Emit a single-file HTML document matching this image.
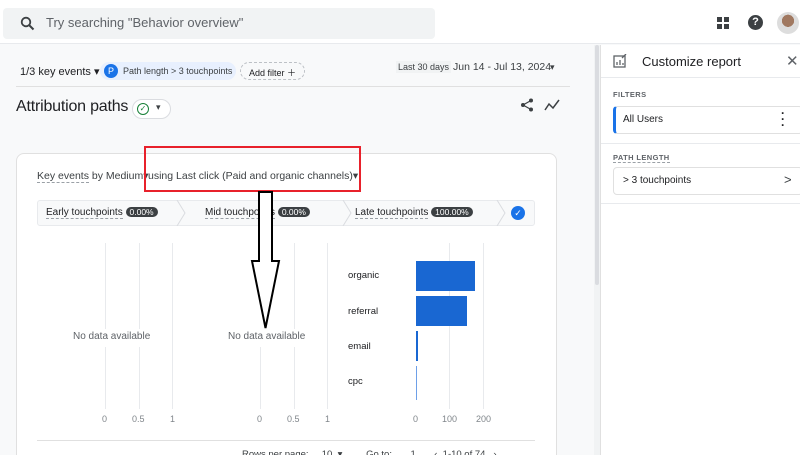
<!DOCTYPE html>
<html><head><style>
*{box-sizing:border-box;margin:0;padding:0}
html,body{width:800px;height:455px;overflow:hidden}
body{background:#f8f9fa;font-family:"Liberation Sans",sans-serif;color:#3c4043;position:relative}
.a{position:absolute;white-space:nowrap}
.g{position:absolute;width:1px;background:#e8eaed}
.t{font-size:9px;color:#80868b}
</style></head><body>
<div class="a" style="left:0;top:0;width:800px;height:44px;background:#fff;border-bottom:1px solid #e8eaed"></div>
<div class="a" style="left:3px;top:8px;width:432px;height:31px;background:#f1f3f4;border-radius:4px"></div>
<svg class="a" style="left:20px;top:16px" width="15" height="15" viewBox="0 0 15 15"><circle cx="6" cy="6" r="4.3" fill="none" stroke="#3c4043" stroke-width="1.8"/><path d="M9 9l4.5 4.5" stroke="#3c4043" stroke-width="2"/></svg>
<div class="a" style="left:46px;top:15px;font-size:13px;color:#5f6368">Try searching "Behavior overview"</div>
<svg class="a" style="left:717px;top:17px" width="13" height="13"><rect x="0" y="0" width="5" height="5" fill="#3c4043"/><rect x="7" y="0" width="5" height="5" fill="#3c4043"/><rect x="0" y="7" width="5" height="5" fill="#3c4043"/><rect x="7" y="7" width="5" height="5" fill="#3c4043"/></svg>
<div class="a" style="left:748px;top:15px;width:15px;height:15px;border-radius:50%;background:#3c4043;color:#fff;font-size:11px;font-weight:bold;text-align:center;line-height:15px">?</div>
<div class="a" style="left:777px;top:12px;width:22px;height:22px;border-radius:50%;background:radial-gradient(circle at 50% 40%,#a07860 0 35%,#ddd 36%)"></div>

<div class="a" style="left:20px;top:65px;font-size:11px;color:#202124">1/3 key events ▾</div>
<div class="a" style="left:100px;top:62px;width:136px;height:18px;border-radius:9px;background:#e8f0fe"></div>
<div class="a" style="left:104px;top:64px;width:14px;height:14px;border-radius:50%;background:#1a73e8;color:#fff;font-size:9px;text-align:center;line-height:14px">P</div>
<div class="a" style="left:123px;top:66px;font-size:9px;color:#3c4043">Path length &gt; 3 touchpoints</div>
<div class="a" style="left:240px;top:62px;width:65px;height:18px;border-radius:9px;border:1px dashed #bdc1c6;font-size:9px;color:#202124;padding:3px 0 0 8px">Add filter ＋</div>
<div class="a" style="left:396px;top:61px;padding:1px 2px;background:#f1f3f4;font-size:9px">Last 30 days</div>
<div class="a" style="left:453px;top:61px;font-size:10.5px;color:#3c4043">Jun 14 - Jul 13, 2024</div>
<div class="a" style="left:550px;top:62px;font-size:9px">▾</div>
<div class="a" style="left:16px;top:86px;width:554px;height:1px;background:#e0e0e0"></div>
<div class="a" style="left:16px;top:98px;font-size:16px;color:#202124;letter-spacing:-0.2px">Attribution paths</div>
<div class="a" style="left:132px;top:99px;width:39px;height:20px;border-radius:10px;border:1px solid #dadce0;background:#fff"></div>
<div class="a" style="left:137px;top:103px;width:12px;height:12px;border-radius:50%;border:1.5px solid #188038;font-size:8px;color:#188038;text-align:center;line-height:10px">✓</div>
<div class="a" style="left:156px;top:102px;font-size:9px">▾</div>
<svg class="a" style="left:520px;top:98px" width="14" height="14"><circle cx="11" cy="2.5" r="2" fill="#3c4043"/><circle cx="3" cy="7" r="2" fill="#3c4043"/><circle cx="11" cy="11.5" r="2" fill="#3c4043"/><path d="M11 2.5L3 7l8 4.5" stroke="#3c4043" fill="none" stroke-width="1.2"/></svg>
<svg class="a" style="left:544px;top:98px" width="16" height="14"><path d="M1 12l4-6 4 4 6-8" stroke="#3c4043" fill="none" stroke-width="1.5"/></svg>

<div class="a" style="left:16px;top:153px;width:541px;height:320px;background:#fff;border:1px solid #e0e0e0;border-radius:8px"></div>
<div class="a" style="left:37px;top:170px;font-size:10.5px;color:#3c4043"><span style="border-bottom:1px dashed #9aa0a6">Key events</span> by Medium▾</div>
<div class="a" style="left:148px;top:170px;font-size:10.5px;color:#3c4043">using Last click (Paid and organic channels)▾</div>
<div class="a" style="left:37px;top:200px;width:498px;height:26px;background:#f8f9fa;border:1px solid #e8eaed;border-radius:3px"></div>
<svg class="a" style="left:37px;top:200px" width="498" height="26"><path d="M140 0l8 13-8 13M306 0l8 13-8 13M460 0l8 13-8 13" stroke="#dadce0" fill="none"/></svg>
<div class="a" style="left:46px;top:207px;font-size:10px;color:#202124"><span style="border-bottom:1px dashed #9aa0a6">Early touchpoints</span> <span style="background:#3c4043;color:#fff;border-radius:6px;padding:0 4px;font-size:8.5px">0.00%</span></div>
<div class="a" style="left:205px;top:207px;font-size:10px;color:#202124"><span style="border-bottom:1px dashed #9aa0a6">Mid touchpoints</span> <span style="background:#3c4043;color:#fff;border-radius:6px;padding:0 4px;font-size:8.5px">0.00%</span></div>
<div class="a" style="left:355px;top:207px;font-size:10px;color:#202124"><span style="border-bottom:1px dashed #9aa0a6">Late touchpoints</span> <span style="background:#3c4043;color:#fff;border-radius:6px;padding:0 4px;font-size:8.5px">100.00%</span></div>
<div class="a" style="left:511px;top:206px;width:14px;height:14px;border-radius:50%;background:#1a73e8;color:#fff;font-size:9px;text-align:center;line-height:14px">✓</div>

<div class="g" style="left:105px;top:243px;height:86px"></div><div class="g" style="left:105px;top:347px;height:62px"></div>
<div class="g" style="left:139px;top:243px;height:86px"></div><div class="g" style="left:139px;top:347px;height:62px"></div>
<div class="g" style="left:172px;top:243px;height:166px"></div>
<div class="g" style="left:260px;top:347px;height:62px"></div>
<div class="g" style="left:294px;top:243px;height:86px"></div><div class="g" style="left:294px;top:347px;height:62px"></div>
<div class="g" style="left:327px;top:243px;height:166px"></div>
<div class="g" style="left:449px;top:243px;height:166px"></div>
<div class="g" style="left:483px;top:243px;height:166px"></div>
<div class="a" style="left:73px;top:331px;font-size:10px;color:#5f6368">No data available</div>
<div class="a" style="left:228px;top:331px;font-size:10px;color:#5f6368">No data available</div>
<div class="a t" style="left:102px;top:414px">0</div><div class="a t" style="left:132px;top:414px">0.5</div><div class="a t" style="left:170px;top:414px">1</div>
<div class="a t" style="left:257px;top:414px">0</div><div class="a t" style="left:287px;top:414px">0.5</div><div class="a t" style="left:325px;top:414px">1</div>
<div class="a t" style="left:413px;top:414px">0</div><div class="a t" style="left:442px;top:414px">100</div><div class="a t" style="left:476px;top:414px">200</div>
<div class="a" style="left:348px;top:270px;font-size:9.5px;color:#202124">organic</div>
<div class="a" style="left:348px;top:306px;font-size:9.5px;color:#202124">referral</div>
<div class="a" style="left:348px;top:341px;font-size:9.5px;color:#202124">email</div>
<div class="a" style="left:348px;top:376px;font-size:9.5px;color:#202124">cpc</div>
<div class="a" style="left:416px;top:261px;width:59px;height:30px;background:#1967d2"></div>
<div class="a" style="left:416px;top:296px;width:51px;height:30px;background:#1967d2"></div>
<div class="a" style="left:416px;top:331px;width:2px;height:30px;background:#1967d2"></div>
<div class="a" style="left:416px;top:366px;width:1px;height:34px;background:#6ea0e8"></div>
<div class="a" style="left:37px;top:440px;width:498px;height:1px;background:#e0e0e0"></div>
<div class="a" style="left:242px;top:449px;font-size:9.5px;color:#3c4043">Rows per page:&nbsp;&nbsp;&nbsp;&nbsp;&nbsp;10&nbsp;&nbsp;▾&nbsp;&nbsp;&nbsp;&nbsp;&nbsp;&nbsp;&nbsp;&nbsp;&nbsp;Go to:&nbsp;&nbsp;&nbsp;&nbsp;&nbsp;&nbsp;&nbsp;1&nbsp;&nbsp;&nbsp;&nbsp;&nbsp;&nbsp;&nbsp;‹&nbsp;&nbsp;1-10 of 74&nbsp;&nbsp;&nbsp;›</div>

<div class="a" style="left:144px;top:146px;width:217px;height:46px;border:2px solid #e8212b"></div>
<svg class="a" style="left:248px;top:190px" width="36" height="142"><path d="M11 2h13v69h7L17.5 138 4 71h7z" fill="#fff" stroke="#000" stroke-width="2"/></svg>

<div class="a" style="left:594px;top:45px;width:6px;height:410px;background:#f1f3f4"></div>
<div class="a" style="left:595px;top:45px;width:4px;height:240px;background:#dadce0;border-radius:2px"></div>

<div class="a" style="left:600px;top:45px;width:200px;height:410px;background:#fff;border-left:1px solid #e0e0e0"></div>
<svg class="a" style="left:613px;top:54px" width="14" height="14"><rect x="1" y="2" width="11" height="11" fill="none" stroke="#5f6368" stroke-width="1.3"/><path d="M4 11V8M7 11V6M10 11V9M9 4l4-4" stroke="#5f6368" stroke-width="1.3"/></svg>
<div class="a" style="left:642px;top:54px;font-size:13px;color:#202124">Customize report</div>
<div class="a" style="left:786px;top:52px;font-size:15px;color:#5f6368">✕</div>
<div class="a" style="left:601px;top:77px;width:199px;height:1px;background:#e8eaed"></div>
<div class="a" style="left:613px;top:90px;font-size:7.5px;color:#5f6368;letter-spacing:.4px;font-weight:bold">FILTERS</div>
<div class="a" style="left:613px;top:106px;width:190px;height:28px;border:1px solid #e0e0e0;border-left:3px solid #1a73e8;border-radius:4px"></div>
<div class="a" style="left:623px;top:114px;font-size:10px;color:#202124">All Users</div>
<div class="a" style="left:781px;top:110px;font-size:12px;font-weight:bold;line-height:6px;color:#202124">·<br>·<br>·</div>
<div class="a" style="left:601px;top:143px;width:199px;height:1px;background:#e8eaed"></div>
<div class="a" style="left:613px;top:153px;font-size:7.5px;color:#5f6368;letter-spacing:.4px;font-weight:bold;border-bottom:1px dashed #9aa0a6">PATH LENGTH</div>
<div class="a" style="left:613px;top:167px;width:190px;height:28px;border:1px solid #e0e0e0;border-radius:4px"></div>
<div class="a" style="left:623px;top:175px;font-size:10px;color:#202124">&gt; 3 touchpoints</div>
<div class="a" style="left:784px;top:172px;font-size:13px;color:#3c4043">&gt;</div>
<div class="a" style="left:601px;top:203px;width:199px;height:1px;background:#e8eaed"></div>
</body></html>
